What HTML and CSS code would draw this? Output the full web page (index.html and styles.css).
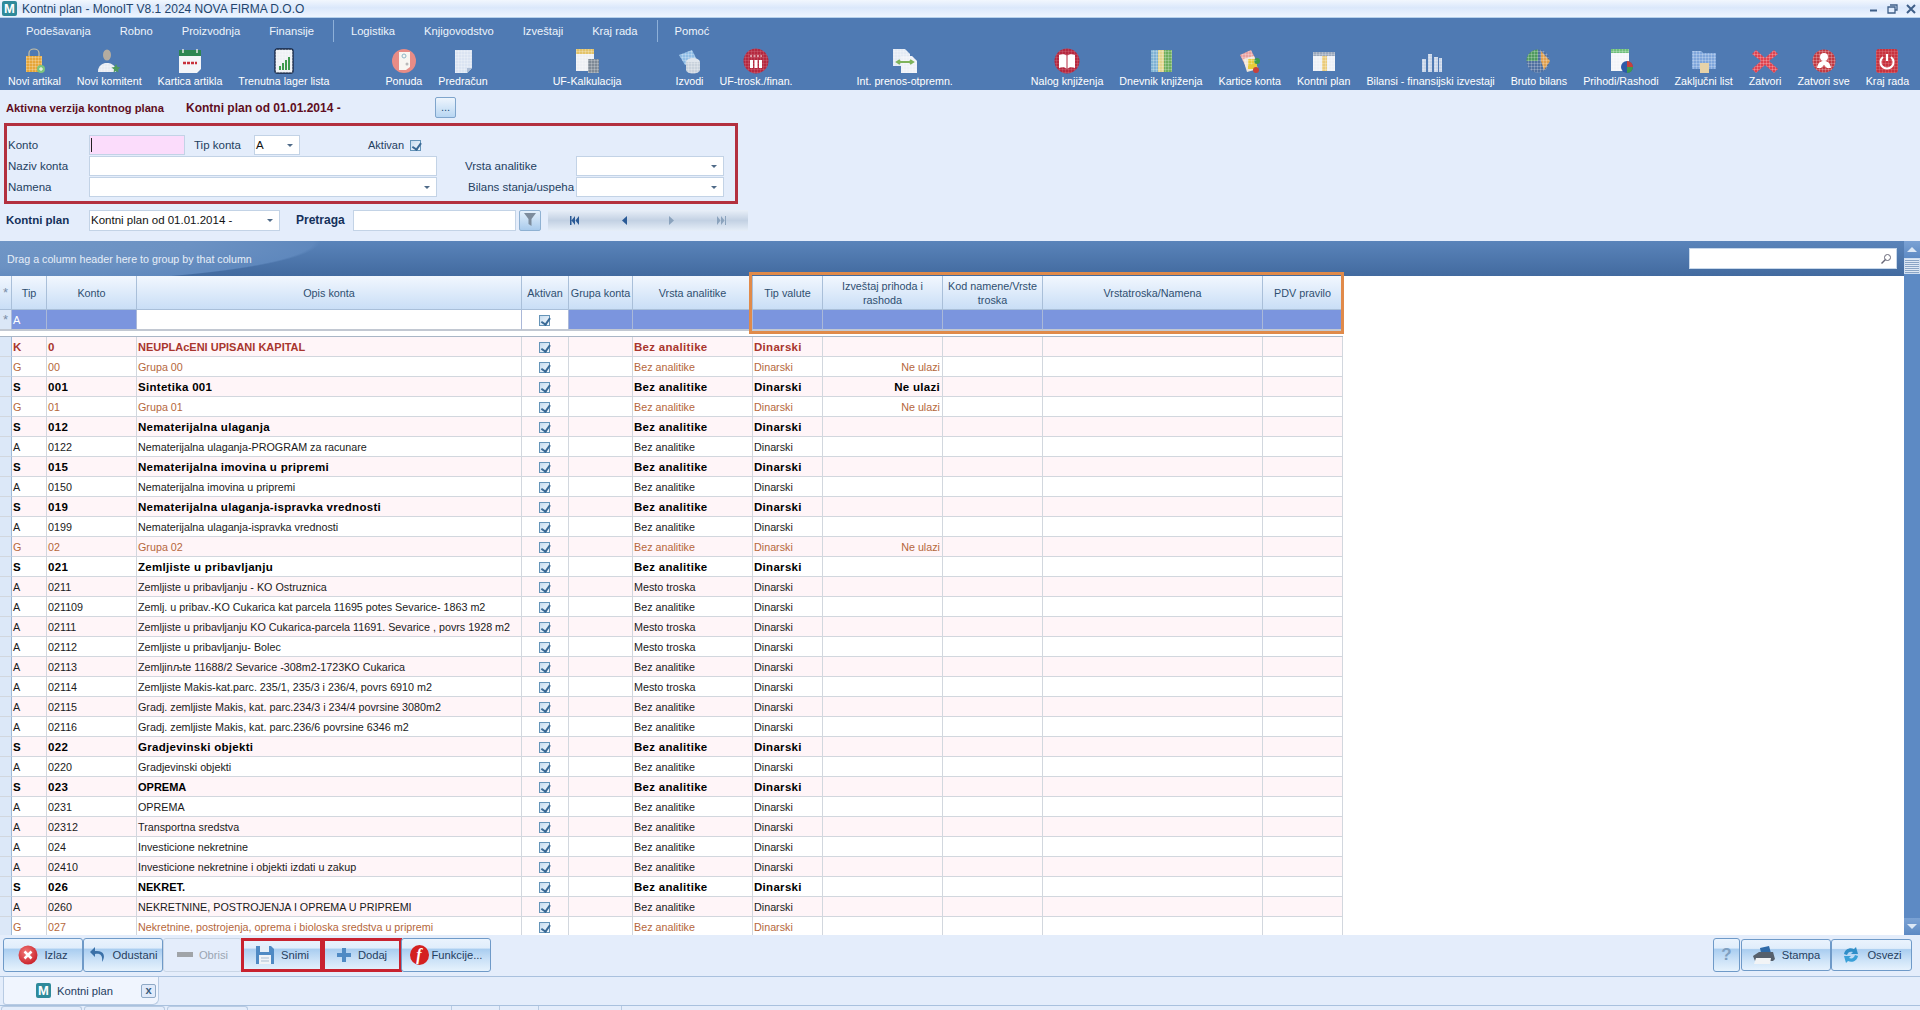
FILE: index.html
```html
<!doctype html>
<html lang="sr">
<head>
	<meta charset="UTF-8" />
	<title>Kontni plan - MonoIT V8.1 2024 NOVA FIRMA D.O.O</title>
	<link rel="stylesheet" href="styles.css">
</head>
<body>
<svg class="defs" width="0" height="0">
	<defs>
		<pattern id="gr" width="3" height="3" patternUnits="userSpaceOnUse">
			<path d="M0 0H3M0 0V3" stroke="#fff" stroke-opacity=".55" stroke-width=".8" fill="none"/>
		</pattern>
		<radialGradient id="redball" cx=".4" cy=".35" r=".7">
			<stop offset="0" stop-color="#f27a78"/><stop offset="1" stop-color="#c81e28"/>
		</radialGradient>
		<symbol id="i-bag" viewBox="0 0 28 26">
			<path d="M9 9V5a5 4 0 0 1 10 0v4" fill="none" stroke="#c9c1a6" stroke-width="1.2"/>
			<rect x="6" y="8" width="16" height="16" fill="#e6a63a"/><rect x="6" y="8" width="16" height="16" fill="url(#gr)"/>
			<circle cx="21" cy="21" r="4" fill="#7cc47e"/><path d="M19 21h4M21 19v4" stroke="#fff"/>
		</symbol>
		<symbol id="i-user" viewBox="0 0 28 26">
			<ellipse cx="12" cy="7" rx="4" ry="5.500" fill="#b4aca0"/>
			<path d="M3 24c0-7 5-9 9-9s9 2 9 9z" fill="#e8ecf2"/><path d="M3 24c0-7 5-9 9-9s9 2 9 9z" fill="url(#gr)"/>
			<path d="M21 16l1.500 3 3 .5-2.500 2 .5 3-2.500-1.500-2.500 1.500.5-3-2.500-2 3-.5z" fill="#4f9a5e"/>
		</symbol>
		<symbol id="i-cal" viewBox="0 0 28 26">
			<path d="M3 5h22v16l-4 4H3z" fill="#f3f5f8"/><rect x="3" y="2" width="22" height="6" fill="#2c8650"/>
			<path d="M7 1v4M21 1v4" stroke="#dfe8e0" stroke-width="1.500"/>
			<path d="M7 15h14" stroke="#c8313a" stroke-width="2.500" stroke-dasharray="3 1"/>
		</symbol>
		<symbol id="i-stock" viewBox="0 0 28 26">
			<rect x="5" y="1" width="18" height="24" rx="2" fill="#eef1f5" stroke="#14233f" stroke-width="1.300"/>
			<rect x="5" y="1" width="18" height="24" fill="url(#gr)"/>
			<path d="M9 22v-4h2v4zM12 22v-7h2v7zM15 22v-10h2v10zM18 22V9h2v13z" fill="#3f9a4e"/>
		</symbol>
		<symbol id="i-offer" viewBox="0 0 28 26">
			<circle cx="14" cy="13" r="12" fill="#e88c86"/>
			<path d="M9 4h11v15l-4 3H9z" fill="#f8f6f2"/><circle cx="14" cy="8" r="2" fill="none" stroke="#8fb6c8"/>
			<circle cx="17" cy="16" r="1.500" fill="#b9b9b9"/>
		</symbol>
		<symbol id="i-page" viewBox="0 0 28 26">
			<path d="M6 2h17v18l-5 5H6z" fill="#dbe4f2"/><path d="M6 2h17v18l-5 5H6z" fill="url(#gr)"/>
			<path d="M18 25v-5h5z" fill="#aebed6"/>
		</symbol>
		<symbol id="i-calc" viewBox="0 0 28 26">
			<rect x="3" y="1" width="18" height="22" fill="#eef0f4"/><rect x="3" y="1" width="18" height="5" fill="#e3c36a"/>
			<rect x="3" y="1" width="18" height="22" fill="url(#gr)"/>
			<rect x="15" y="11" width="11" height="14" fill="#7f8a96"/><rect x="15" y="11" width="11" height="14" fill="url(#gr)"/>
		</symbol>
		<symbol id="i-bank" viewBox="0 0 28 26">
			<path d="M3 7l13-5 5 10-12 5z" fill="#8fbde6"/><path d="M3 7l13-5 5 10-12 5z" fill="url(#gr)"/>
			<ellipse cx="17" cy="14" rx="7" ry="4" fill="#dfe5ec"/><path d="M10 14v8a7 3.500 0 0 0 14 0v-8z" fill="#c9d2dc"/>
			<path d="M10 14v8a7 3.500 0 0 0 14 0v-8z" fill="url(#gr)"/>
		</symbol>
		<symbol id="i-cost" viewBox="0 0 28 26">
			<circle cx="14" cy="13" r="12.500" fill="#b5283f"/><circle cx="14" cy="13" r="12.500" fill="url(#gr)" opacity=".5"/>
			<path d="M8 12h3v8H8zM12.500 12h3v8h-3zM17 12h3v8h-3z" fill="#fff"/><path d="M8 8h12" stroke="#fff" stroke-dasharray="2 1.500"/>
		</symbol>
		<symbol id="i-move" viewBox="0 0 28 26">
			<path d="M2 1h12l5 5v12H2z" fill="#e4eaf4"/><path d="M10 8h11l5 5v12H10z" fill="#eef1f7"/>
			<path d="M2 1h12l5 5v12H2zM10 8h11l5 5v12H10z" fill="url(#gr)"/>
			<path d="M7 14h14M9 12l-3 2 3 2M19 12l3 2-3 2" fill="none" stroke="#7fb35c" stroke-width="2"/>
		</symbol>
		<symbol id="i-book" viewBox="0 0 28 26">
			<circle cx="14" cy="13" r="12.500" fill="#b5283f"/><circle cx="14" cy="13" r="12.500" fill="url(#gr)" opacity=".5"/>
			<path d="M6 7c3-1 6-1 8 1 2-2 5-2 8-1v13c-3-1-6-1-8 1-2-2-5-2-8-1z" fill="#fff"/><path d="M14 8v13" stroke="#b5283f"/>
		</symbol>
		<symbol id="i-journal" viewBox="0 0 28 26">
			<rect x="4" y="2" width="7" height="22" fill="#7fb2d4"/><rect x="11" y="2" width="6" height="22" fill="#e2d48c"/>
			<rect x="17" y="2" width="8" height="22" fill="#6fae5e"/><rect x="4" y="2" width="21" height="22" fill="url(#gr)"/>
		</symbol>
		<symbol id="i-cards" viewBox="0 0 28 26">
			<path d="M4 7l11-5 6 12-11 5z" fill="#e8a0a0"/><path d="M7 11l11-3 4 13-11 3z" fill="#f0e6d8"/>
			<rect x="12" y="11" width="9" height="10" fill="#e8cc3a"/><circle cx="21" cy="13" r="3" fill="#3f9a4e"/>
			<circle cx="20" cy="22" r="3" fill="#c8403a"/><path d="M4 7l11-5 6 12-11 5z" fill="url(#gr)"/>
		</symbol>
		<symbol id="i-plan" viewBox="0 0 28 26">
			<rect x="3" y="4" width="22" height="19" fill="#eef1f6"/><rect x="3" y="4" width="22" height="4" fill="#9aa8bc"/>
			<rect x="12" y="8" width="5" height="15" fill="#eacb7a"/><rect x="3" y="4" width="22" height="19" fill="url(#gr)"/>
		</symbol>
		<symbol id="i-bars" viewBox="0 0 28 26">
			<path d="M5 11h4v13H5zM11 6h4v18h-4zM17 9h4v15h-4zM22 10h3v14h-3z" fill="#c6d4e8"/>
			<path d="M5 11h4v13H5zM11 6h4v18h-4zM17 9h4v15h-4zM22 10h3v14h-3z" fill="url(#gr)"/>
		</symbol>
		<symbol id="i-pie" viewBox="0 0 28 26">
			<circle cx="13" cy="13" r="11.500" fill="#5070a0"/>
			<path d="M13 13V1.500A11.500 11.500 0 0 0 1.500 13z" fill="#4f9a5e"/>
			<path d="M16 3l9 10-6 9-3-9z" fill="#e0a050"/><circle cx="13" cy="13" r="11.500" fill="url(#gr)"/>
		</symbol>
		<symbol id="i-inc" viewBox="0 0 28 26">
			<rect x="4" y="1" width="18" height="22" fill="#f3f5f8"/><rect x="4" y="1" width="18" height="4" fill="#6fbf7a"/>
			<rect x="4" y="1" width="18" height="22" fill="url(#gr)"/>
			<circle cx="20" cy="19" r="6" fill="#2d5aa8"/><path d="M20 19V13a6 6 0 0 1 6 6z" fill="#c8403a"/><path d="M20 19h6a6 6 0 0 1-6 6z" fill="#3f9a4e"/>
		</symbol>
		<symbol id="i-folder" viewBox="0 0 28 26">
			<path d="M2 3h9l2 2h13v16H2z" fill="#7fa6dc"/><path d="M2 3h9l2 2h13v16H2z" fill="url(#gr)"/>
			<rect x="10" y="15" width="9" height="10" fill="#e6d2a8"/>
		</symbol>
		<symbol id="i-x" viewBox="0 0 28 26">
			<path d="M5 2l9 8 9-8 4 4-9 7 9 8-4 4-9-8-9 8-4-4 9-8-9-7z" fill="#e0434f"/><path d="M5 2l9 8 9-8 4 4-9 7 9 8-4 4-9-8-9 8-4-4 9-8-9-7z" fill="url(#gr)"/>
		</symbol>
		<symbol id="i-xall" viewBox="0 0 28 26">
			<circle cx="14" cy="13" r="11.500" fill="#c23a42"/><circle cx="14" cy="13" r="11.500" fill="url(#gr)"/>
			<circle cx="14" cy="9" r="4" fill="#fff"/><path d="M7 20c1-6 4-7 7-7s6 1 7 7l-4 0-3-3-3 3z" fill="#fff"/>
		</symbol>
		<symbol id="i-off" viewBox="0 0 28 26">
			<rect x="3" y="1" width="22" height="24" rx="3" fill="#c8323e"/><rect x="3" y="1" width="22" height="24" rx="3" fill="url(#gr)" opacity=".6"/>
			<path d="M10 9a6.500 6.500 0 1 0 8 0" fill="none" stroke="#fff" stroke-width="2"/><path d="M14 6v7" stroke="#fff" stroke-width="2"/>
		</symbol>
	</defs>
</svg>

<div class="app">
	<header class="titlebar">
		<span class="appicon">M</span>
		<span class="title">Kontni plan - MonoIT V8.1 2024 NOVA FIRMA D.O.O</span>
		<span class="winbtns">
			<svg width="10" height="10"><path d="M1 6.500h7" stroke="#3f5f88" stroke-width="2"/></svg>
			<svg width="11" height="10"><path d="M3 1h7v5H8M1 3h7v6H1z" fill="none" stroke="#3f5f88" stroke-width="1.300"/></svg>
			<svg width="11" height="10"><path d="M1 1l8 8M9 1l-8 8" stroke="#3f5f88" stroke-width="2"/></svg>
		</span>
	</header>

	<nav class="menubar">
		<a>Podešavanja</a><a>Robno</a><a>Proizvodnja</a><a>Finansije</a>
		<i class="menusep"></i>
		<a>Logistika</a><a>Knjigovodstvo</a><a>Izveštaji</a><a>Kraj rada</a>
		<i class="menusep"></i>
		<a>Pomoć</a>
	</nav>

	<div class="toolbar">
		<a class="tool"><svg><use href="#i-bag"/></svg>Novi artikal</a>
		<a class="tool"><svg><use href="#i-user"/></svg>Novi komitent</a>
		<a class="tool"><svg><use href="#i-cal"/></svg>Kartica artikla</a>
		<a class="tool"><svg><use href="#i-stock"/></svg>Trenutna lager lista</a>
		<a class="tool gap-a"><svg><use href="#i-offer"/></svg>Ponuda</a>
		<a class="tool"><svg><use href="#i-page"/></svg>Predračun</a>
		<a class="tool gap-b"><svg><use href="#i-calc"/></svg>UF-Kalkulacija</a>
		<a class="tool gap-e"><svg><use href="#i-bank"/></svg>Izvodi</a>
		<a class="tool"><svg><use href="#i-cost"/></svg>UF-trosk./finan.</a>
		<a class="tool gap-c"><svg><use href="#i-move"/></svg>Int. prenos-otpremn.</a>
		<a class="tool gap-d"><svg><use href="#i-book"/></svg>Nalog knjiženja</a>
		<a class="tool"><svg><use href="#i-journal"/></svg>Dnevnik knjiženja</a>
		<a class="tool"><svg><use href="#i-cards"/></svg>Kartice konta</a>
		<a class="tool"><svg><use href="#i-plan"/></svg>Kontni plan</a>
		<a class="tool"><svg><use href="#i-bars"/></svg>Bilansi - finansijski izvestaji</a>
		<a class="tool"><svg><use href="#i-pie"/></svg>Bruto bilans</a>
		<a class="tool"><svg><use href="#i-inc"/></svg>Prihodi/Rashodi</a>
		<a class="tool"><svg><use href="#i-folder"/></svg>Zaključni list</a>
		<a class="tool"><svg><use href="#i-x"/></svg>Zatvori</a>
		<a class="tool"><svg><use href="#i-xall"/></svg>Zatvori sve</a>
		<a class="tool"><svg><use href="#i-off"/></svg>Kraj rada</a>
	</div>

	<section class="panel">
		<div class="verzija">
			<b class="v-label">Aktivna verzija kontnog plana</b>
			<b class="v-value">Kontni plan od 01.01.2014 -</b>
			<button class="dots">...</button>
		</div>

		<div class="form redbox">
			<label>Konto</label>
			<span class="input pink"><i class="caret"></i></span>
			<label class="tip">Tip konta</label>
			<span class="input combo">A</span>
			<span class="aktivan">Aktivan <i class="chk"></i></span>
			<span class="blank"></span>
			<span class="blank"></span>

			<label>Naziv konta</label>
			<span class="input wide"></span>
			<label class="ana">Vrsta analitike</label>
			<span class="input combo"></span>

			<label>Namena</label>
			<span class="input wide combo"></span>
			<label class="bil">Bilans stanja/uspeha</label>
			<span class="input combo"></span>
		</div>

		<div class="search">
			<b class="s-label">Kontni plan</b>
			<span class="input combo s-plan">Kontni plan od 01.01.2014 -</span>
			<b class="s-pre">Pretraga</b>
			<span class="input s-text"></span>
			<button class="filter"><svg width="14" height="16"><path d="M1 2h12L8.500 8v7l-3-2V8z" fill="#7d8c9c"/></svg></button>
			<div class="navi">
				<svg width="10" height="9"><path d="M1 0h1.500v9H1zM6 0v9L2.500 4.500zM10 0v9L6.500 4.500z" fill="#2a5a96"/></svg>
				<svg width="5" height="9"><path d="M5 0v9L0 4.500z" fill="#2a5a96"/></svg>
				<svg width="5" height="9"><path d="M0 0v9l5-4.500z" fill="#8ba3bd"/></svg>
				<svg width="10" height="9"><path d="M9 0h-1v9h1zM4 0v9l3.500-4.500zM0 0v9l3.500-4.500z" fill="#8ba3bd"/></svg>
			</div>
		</div>
	</section>

	<section class="gridarea">
		<div class="gridmain">
			<div class="groupbar">
				<span>Drag a column header here to group by that column</span>
				<span class="findbox"><svg width="12" height="12"><circle cx="7.500" cy="4.500" r="3" fill="none" stroke="#667"/><path d="M5.500 6.500L1.500 10.500" stroke="#667" stroke-width="1.500"/></svg></span>
			</div>
			<div class="gridscroll">
				<table class="grid">
					<colgroup>
						<col class="c-ind"><col class="c-tip"><col class="c-kon"><col class="c-opis"><col class="c-akt"><col class="c-gru">
						<col class="c-vrs"><col class="c-val"><col class="c-izv"><col class="c-kod"><col class="c-tro"><col class="c-pdv">
					</colgroup>
					<thead>
						<tr class="head"><th class="ind">*</th><th>Tip</th><th>Konto</th><th>Opis konta</th><th>Aktivan</th><th>Grupa konta</th><th>Vrsta analitike</th><th>Tip valute</th><th>Izveštaj prihoda i rashoda</th><th>Kod namene/Vrste troska</th><th>Vrstatroska/Namena</th><th>PDV pravilo</th></tr>
						<tr class="newrow"><td class="ind">*</td><td>A</td><td></td><td class="wh"></td><td class="wh c"><i class="chk"></i></td><td></td><td></td><td></td><td></td><td></td><td></td><td></td></tr>
						<tr class="spacer"><td colspan="12"></td></tr>
					</thead>
					<tbody>
						<tr class="rk"><td class="ind"></td><td>K</td><td>0</td><td class="up">NEUPLAcENI UPISANI KAPITAL</td><td class="c"><i class="chk"></i></td><td></td><td>Bez analitike</td><td>Dinarski</td><td class="r"></td><td></td><td></td><td></td></tr>
						<tr class="rg"><td class="ind"></td><td>G</td><td>00</td><td>Grupa 00</td><td class="c"><i class="chk"></i></td><td></td><td>Bez analitike</td><td>Dinarski</td><td class="r">Ne ulazi</td><td></td><td></td><td></td></tr>
						<tr class="rs"><td class="ind"></td><td>S</td><td>001</td><td>Sintetika 001</td><td class="c"><i class="chk"></i></td><td></td><td>Bez analitike</td><td>Dinarski</td><td class="r">Ne ulazi</td><td></td><td></td><td></td></tr>
						<tr class="rg"><td class="ind"></td><td>G</td><td>01</td><td>Grupa 01</td><td class="c"><i class="chk"></i></td><td></td><td>Bez analitike</td><td>Dinarski</td><td class="r">Ne ulazi</td><td></td><td></td><td></td></tr>
						<tr class="rs"><td class="ind"></td><td>S</td><td>012</td><td>Nematerijalna ulaganja</td><td class="c"><i class="chk"></i></td><td></td><td>Bez analitike</td><td>Dinarski</td><td class="r"></td><td></td><td></td><td></td></tr>
						<tr><td class="ind"></td><td>A</td><td>0122</td><td>Nematerijalna ulaganja-PROGRAM za racunare</td><td class="c"><i class="chk"></i></td><td></td><td>Bez analitike</td><td>Dinarski</td><td class="r"></td><td></td><td></td><td></td></tr>
						<tr class="rs"><td class="ind"></td><td>S</td><td>015</td><td>Nematerijalna imovina u pripremi</td><td class="c"><i class="chk"></i></td><td></td><td>Bez analitike</td><td>Dinarski</td><td class="r"></td><td></td><td></td><td></td></tr>
						<tr><td class="ind"></td><td>A</td><td>0150</td><td>Nematerijalna imovina u pripremi</td><td class="c"><i class="chk"></i></td><td></td><td>Bez analitike</td><td>Dinarski</td><td class="r"></td><td></td><td></td><td></td></tr>
						<tr class="rs"><td class="ind"></td><td>S</td><td>019</td><td>Nematerijalna ulaganja-ispravka vrednosti</td><td class="c"><i class="chk"></i></td><td></td><td>Bez analitike</td><td>Dinarski</td><td class="r"></td><td></td><td></td><td></td></tr>
						<tr><td class="ind"></td><td>A</td><td>0199</td><td>Nematerijalna ulaganja-ispravka vrednosti</td><td class="c"><i class="chk"></i></td><td></td><td>Bez analitike</td><td>Dinarski</td><td class="r"></td><td></td><td></td><td></td></tr>
						<tr class="rg"><td class="ind"></td><td>G</td><td>02</td><td>Grupa 02</td><td class="c"><i class="chk"></i></td><td></td><td>Bez analitike</td><td>Dinarski</td><td class="r">Ne ulazi</td><td></td><td></td><td></td></tr>
						<tr class="rs"><td class="ind"></td><td>S</td><td>021</td><td>Zemljiste u pribavljanju</td><td class="c"><i class="chk"></i></td><td></td><td>Bez analitike</td><td>Dinarski</td><td class="r"></td><td></td><td></td><td></td></tr>
						<tr><td class="ind"></td><td>A</td><td>0211</td><td>Zemljiste u pribavljanju - KO Ostruznica</td><td class="c"><i class="chk"></i></td><td></td><td>Mesto troska</td><td>Dinarski</td><td class="r"></td><td></td><td></td><td></td></tr>
						<tr><td class="ind"></td><td>A</td><td>021109</td><td>Zemlj. u pribav.-KO Cukarica kat parcela 11695 potes Sevarice- 1863 m2</td><td class="c"><i class="chk"></i></td><td></td><td>Bez analitike</td><td>Dinarski</td><td class="r"></td><td></td><td></td><td></td></tr>
						<tr><td class="ind"></td><td>A</td><td>02111</td><td>Zemljiste u pribavljanju KO Cukarica-parcela 11691. Sevarice , povrs 1928 m2</td><td class="c"><i class="chk"></i></td><td></td><td>Mesto troska</td><td>Dinarski</td><td class="r"></td><td></td><td></td><td></td></tr>
						<tr><td class="ind"></td><td>A</td><td>02112</td><td>Zemljiste u pribavljanju- Bolec</td><td class="c"><i class="chk"></i></td><td></td><td>Mesto troska</td><td>Dinarski</td><td class="r"></td><td></td><td></td><td></td></tr>
						<tr><td class="ind"></td><td>A</td><td>02113</td><td>Zemljinљte 11688/2 Sevarice -308m2-1723KO Cukarica</td><td class="c"><i class="chk"></i></td><td></td><td>Bez analitike</td><td>Dinarski</td><td class="r"></td><td></td><td></td><td></td></tr>
						<tr><td class="ind"></td><td>A</td><td>02114</td><td>Zemljiste Makis-kat.parc. 235/1, 235/3 i 236/4, povrs 6910 m2</td><td class="c"><i class="chk"></i></td><td></td><td>Mesto troska</td><td>Dinarski</td><td class="r"></td><td></td><td></td><td></td></tr>
						<tr><td class="ind"></td><td>A</td><td>02115</td><td>Gradj. zemljiste Makis, kat. parc.234/3 i 234/4 povrsine 3080m2</td><td class="c"><i class="chk"></i></td><td></td><td>Bez analitike</td><td>Dinarski</td><td class="r"></td><td></td><td></td><td></td></tr>
						<tr><td class="ind"></td><td>A</td><td>02116</td><td>Gradj. zemljiste Makis, kat. parc.236/6 povrsine 6346 m2</td><td class="c"><i class="chk"></i></td><td></td><td>Bez analitike</td><td>Dinarski</td><td class="r"></td><td></td><td></td><td></td></tr>
						<tr class="rs"><td class="ind"></td><td>S</td><td>022</td><td>Gradjevinski objekti</td><td class="c"><i class="chk"></i></td><td></td><td>Bez analitike</td><td>Dinarski</td><td class="r"></td><td></td><td></td><td></td></tr>
						<tr><td class="ind"></td><td>A</td><td>0220</td><td>Gradjevinski objekti</td><td class="c"><i class="chk"></i></td><td></td><td>Bez analitike</td><td>Dinarski</td><td class="r"></td><td></td><td></td><td></td></tr>
						<tr class="rs"><td class="ind"></td><td>S</td><td>023</td><td class="up">OPREMA</td><td class="c"><i class="chk"></i></td><td></td><td>Bez analitike</td><td>Dinarski</td><td class="r"></td><td></td><td></td><td></td></tr>
						<tr><td class="ind"></td><td>A</td><td>0231</td><td>OPREMA</td><td class="c"><i class="chk"></i></td><td></td><td>Bez analitike</td><td>Dinarski</td><td class="r"></td><td></td><td></td><td></td></tr>
						<tr><td class="ind"></td><td>A</td><td>02312</td><td>Transportna sredstva</td><td class="c"><i class="chk"></i></td><td></td><td>Bez analitike</td><td>Dinarski</td><td class="r"></td><td></td><td></td><td></td></tr>
						<tr><td class="ind"></td><td>A</td><td>024</td><td>Investicione nekretnine</td><td class="c"><i class="chk"></i></td><td></td><td>Bez analitike</td><td>Dinarski</td><td class="r"></td><td></td><td></td><td></td></tr>
						<tr><td class="ind"></td><td>A</td><td>02410</td><td>Investicione nekretnine i objekti izdati u zakup</td><td class="c"><i class="chk"></i></td><td></td><td>Bez analitike</td><td>Dinarski</td><td class="r"></td><td></td><td></td><td></td></tr>
						<tr class="rs"><td class="ind"></td><td>S</td><td>026</td><td class="up">NEKRET.</td><td class="c"><i class="chk"></i></td><td></td><td>Bez analitike</td><td>Dinarski</td><td class="r"></td><td></td><td></td><td></td></tr>
						<tr><td class="ind"></td><td>A</td><td>0260</td><td>NEKRETNINE, POSTROJENJA I OPREMA U PRIPREMI</td><td class="c"><i class="chk"></i></td><td></td><td>Bez analitike</td><td>Dinarski</td><td class="r"></td><td></td><td></td><td></td></tr>
						<tr class="rg"><td class="ind"></td><td>G</td><td>027</td><td>Nekretnine, postrojenja, oprema i bioloska sredstva u pripremi</td><td class="c"><i class="chk"></i></td><td></td><td>Bez analitike</td><td>Dinarski</td><td class="r"></td><td></td><td></td><td></td></tr>
					</tbody>
				</table>
				<div class="orangebox"></div>
			</div>
		</div>
		<div class="vscroll">
			<span class="sc-arrow"></span>
			<span class="sc-thumb"></span>
			<span class="sc-arrow down"></span>
		</div>
	</section>

	<div class="cmdbar">
		<button class="cmd w-izl">
			<svg width="20" height="20"><circle cx="10" cy="10" r="9.500" fill="url(#redball)"/><path d="M6.500 6.500l7 7M13.500 6.500l-7 7" stroke="#fff" stroke-width="2.500"/></svg>Izlaz</button>
		<button class="cmd w-odu">
			<svg width="18" height="20"><path d="M6 2L1 7l5 5V9c5-1 8 1 7 8 4-6 2-12-7-11z" fill="#3a70a8"/></svg>Odustani</button>
		<button class="cmd w-obr off">
			<svg width="16" height="8"><rect y="1" width="16" height="5" fill="#a0a4a8"/></svg>Obrisi</button>
		<button class="cmd w-sni marked">
			<svg width="20" height="20"><path d="M1 1h15l3 3v15H1z" fill="#4f8ac4"/><rect x="5" y="1" width="9" height="6" fill="#e4eef8"/><rect x="4" y="10" width="12" height="9" fill="#f0f4f8"/><path d="M6 13h8M6 16h8" stroke="#a9bdd2"/></svg>Snimi</button>
		<button class="cmd w-dod marked">
			<svg width="16" height="16"><path d="M6 1h4v5h5v4h-5v5H6v-5H1V6h5z" fill="#4f8ac4"/></svg>Dodaj</button>
		<button class="cmd w-fun">
			<span class="fn">f</span>Funkcije...</button>
		<span class="cmdfill"></span>
		<button class="cmd w-hlp"><span class="qm">?</span></button>
		<button class="cmd w-sta">
			<svg width="24" height="20"><path d="M8 3l9-2 2 7H9z" fill="#2f6aa8"/><path d="M1 11l6-4h14l2 7-2 2H3z" fill="#56606c"/><path d="M4 13l15 0-1 6H2z" fill="#f2f4f6"/></svg>Stampa</button>
		<button class="cmd w-osv">
			<svg width="20" height="20"><path d="M3 9c1-5 6-7 10-5l2-2 2 7-7 0 2-2c-3-1-5 0-6 3z" fill="#2f8ec8"/><path d="M17 11c-1 5-6 7-10 5l-2 2-2-7 7 0-2 2c3 1 5 0 6-3z" fill="#3aa0d8"/></svg>Osvezi</button>
	</div>

	<div class="tabbar">
		<div class="tab">
			<span class="appicon">M</span>
			<span>Kontni plan</span>
			<span class="tabx">x</span>
		</div>
	</div>
	<div class="statusbar">
		<i class="st-a"></i><i class="st-a"></i><i class="st-a"></i>
		<i class="st-b"></i><i class="st-c"></i><i class="st-d"></i><i class="st-e"></i>
	</div>
</div>
</body>
</html>
```

FILE: styles.css
```css
*{
	margin: 0;
	padding: 0;
	box-sizing: border-box;
}
html,body{
	height: 100%;
	overflow: hidden;
}
body{
	font-family: "Liberation Sans", Arial, sans-serif;
	font-size: 11px;
	color: #1b2b3d;
	background: #e4edfb;
}
.defs{
	display: block;
}
button{
	font: inherit;
	color: inherit;
}
.app{
	display: flex;
	flex-direction: column;
	width: 1920px;
	height: 1010px;
}

/* title */
.titlebar{
	display: flex;
	align-items: center;
	height: 18px;
	flex: none;
	background: linear-gradient(#f2f7fe,#dbe8fb 45%,#eef5ff);
	border-bottom: 1px solid #b5d0ec;
	padding-left: 2px;
}
.appicon{
	display: inline-block;
	width: 15px;
	height: 15px;
	line-height: 15px;
	text-align: center;
	font-weight: bold;
	font-size: 13px;
	color: #fff;
	background: #2f8a9a;
	border-radius: 2px;
}
.title{
	margin-left: 5px;
	font-size: 12px;
	color: #23456d;
}
.winbtns{
	margin-left: auto;
	display: flex;
	align-items: center;
	gap: 8px;
	padding-right: 3px;
}

/* menu + toolbar */
.menubar{
	display: flex;
	align-items: center;
	height: 26px;
	flex: none;
	background: #4f7ab3;
	padding-left: 26px;
	color: #eef4fb;
	font-size: 11.200px;
}
.menubar a{
	margin-right: 29px;
}
.menusep{
	width: 1px;
	height: 22px;
	background: #8eb0d8;
	margin: 0 17px 0 -10px;
}
.toolbar{
	display: flex;
	height: 46px;
	flex: none;
	background: #4f7ab3;
	padding: 4px 0 0 0;
	color: #fff;
	font-size: 10.700px;
}
.tool{
	display: flex;
	flex-direction: column;
	align-items: center;
	padding: 0 8px;
	white-space: nowrap;
}
.tool svg{
	width: 28px;
	height: 26px;
	margin-bottom: 1px;
}
.gap-a{ margin-left: 40px; }
.gap-b{ margin-left: 49px; }
.gap-c{ margin-left: 48px; }
.gap-d{ margin-left: 62px; }
.gap-e{ margin-left: 38px; }

/* top panel */
.panel{
	height: 151px;
	flex: none;
	background: #e4edfb;
	padding: 7px 0 0 4px;
}
.verzija{
	display: flex;
	align-items: center;
	height: 21px;
	color: #5f0d22;
	padding-left: 2px;
}
.v-label{
	width: 180px;
	font-size: 11.200px;
}
.v-value{
	width: 249px;
	font-size: 12px;
}
.dots{
	width: 21px;
	height: 21px;
	border: 1px solid #7fa5cc;
	border-radius: 2px;
	background: linear-gradient(#eef5fd,#b8d6f2);
	color: #24527e;
	line-height: 1;
}
.redbox{
	margin-top: 5px;
	width: 734px;
	height: 81px;
	border: 3px solid #b3303f;
}
.form{
	display: grid;
	grid-template-columns: 82px 96px 69px 46px 137px 139px 148px;
	grid-template-rows: 20px 20px 20px;
	row-gap: 1px;
	padding: 9px 0 0 0;
	align-items: center;
}
.form label{
	padding-left: 1px;
	font-size: 11.500px;
	color: #23405f;
	white-space: nowrap;
}
.form .tip{
	padding-left: 9px;
}
.form .ana{
	padding-left: 28px;
}
.form .bil{
	padding-left: 31px;
}
.input{
	display: block;
	position: relative;
	height: 20px;
	line-height: 18px;
	background: #fff;
	border: 1px solid #c3d3e6;
	padding-left: 1px;
	font-size: 11.500px;
	color: #111;
}
.input.pink{
	background: #fbdcfb;
}
.caret{
	display: block;
	width: 1px;
	height: 14px;
	margin-top: 2px;
	background: #222;
}
.input.wide{
	grid-column: 2 / 6;
}
.input.combo::after{
	content: "";
	position: absolute;
	right: 6px;
	top: 8px;
	border: 3px solid transparent;
	border-top: 3px solid #4f6a88;
	border-bottom: 0;
}
.aktivan{
	display: flex;
	align-items: center;
	gap: 6px;
	padding-left: 68px;
	font-size: 11px;
	color: #23405f;
}
.chk{
	display: inline-block;
	position: relative;
	width: 11px;
	height: 11px;
	background: linear-gradient(135deg,#c6dcef,#f4f9fe);
	border: 1px solid #6594b8;
	vertical-align: middle;
}
.chk::after{
	content: "";
	position: absolute;
	left: 3px;
	top: 0;
	width: 3.500px;
	height: 6.500px;
	border: solid #3a6a96;
	border-width: 0 2px 2px 0;
	transform: rotate(35deg);
}
.search{
	display: flex;
	align-items: center;
	height: 22px;
	margin-top: 5px;
	padding-left: 2px;
	color: #14305a;
}
.s-label{
	width: 83px;
	font-size: 11.500px;
}
.input.s-plan{
	width: 191px;
	height: 21px;
}
.s-pre{
	margin-left: 16px;
	width: 57px;
	font-size: 12px;
}
.input.s-text{
	width: 163px;
	height: 21px;
}
.filter{
	width: 22px;
	height: 21px;
	margin-left: 3px;
	border: 1px solid #8fb1d2;
	border-radius: 2px;
	background: linear-gradient(#e4f0fb,#a9cbec);
}
.navi{
	display: flex;
	align-items: center;
	justify-content: space-around;
	width: 200px;
	height: 21px;
	margin-left: 7px;
	background: linear-gradient(#e8eff8,#c3d1e3 50%,#e6eef8);
}

/* grid */
.gridarea{
	display: flex;
	height: 694px;
	flex: none;
	overflow: hidden;
}
.gridmain{
	flex: 1;
	display: flex;
	flex-direction: column;
	min-width: 0;
}
.groupbar{
	display: flex;
	align-items: center;
	justify-content: space-between;
	height: 35px;
	flex: none;
	padding: 0 7px;
	color: #e6eef8;
	font-size: 10.700px;
	background:
		radial-gradient(ellipse 320px 42px at 0 0,#7096c6 0,#6c92c3 60%,#5f88bd 98%,transparent 100%),
		linear-gradient(#5a84ba,#426a9f);
}
.findbox{
	display: flex;
	align-items: center;
	justify-content: flex-end;
	width: 208px;
	height: 21px;
	padding-right: 4px;
	background: #fff;
	border: 1px solid #c8d8ea;
}
.gridscroll{
	position: relative;
	flex: 1;
	background: #fff;
}
.grid{
	table-layout: fixed;
	width: 1343px;
	border-collapse: separate;
	border-spacing: 0;
	color: #1a1a1a;
}
.c-ind{ width: 12px; }
.c-tip{ width: 35px; }
.c-kon{ width: 90px; }
.c-opis{ width: 385px; }
.c-akt{ width: 47px; }
.c-gru{ width: 64px; }
.c-vrs{ width: 120px; }
.c-val{ width: 70px; }
.c-izv{ width: 120px; }
.c-kod{ width: 100px; }
.c-tro{ width: 220px; }
.c-pdv{ width: 80px; }

.grid th{
	height: 34px;
	padding-top: 2px;
	font-weight: normal;
	font-size: 10.800px;
	line-height: 13.500px;
	color: #2f4f70;
	background: linear-gradient(#f2f7fe,#c9def6);
	border-right: 1px solid #a9bfd9;
	border-bottom: 1px solid #a9bfd9;
}
.grid .head .ind,
.newrow .ind{
	padding: 0;
	font-size: 13px;
	color: #7a8ea8;
}
.newrow td{
	height: 20px;
	background: #7b95de;
	color: #fff;
	border-right: 1px solid #aab8d8;
	border-bottom: 1px solid #c2c8d2;
	padding-left: 1px;
}
.newrow .ind{
	background: #dbe7f7;
	text-align: center;
}
.newrow .wh{
	background: #fff;
}
.spacer td{
	height: 7px;
	background: #fff;
	border-top: 1px solid #c2c8d2;
	border-bottom: 1px solid #a9b6c6;
}
tbody td{
	height: 20px;
	padding: 0 2px 0 1px;
	white-space: nowrap;
	overflow: hidden;
	border-right: 1px solid #d2d7de;
	border-bottom: 1px solid #d2d7de;
	font-size: 10.750px;
}
tbody tr:nth-child(odd){
	background: #fff5f8;
}
tbody .ind{
	background: #dce8f8;
	border-right: 1px solid #9fbad9;
}
td.c{
	text-align: center;
	padding: 0 2px 0 0;
}
.r{
	text-align: right;
}
.rk td,
.rs td{
	font-weight: bold;
	font-size: 11.500px;
	letter-spacing: .3px;
}
.rk{
	color: #a8352e;
}
.rg{
	color: #b5673c;
}
.rs{
	color: #000;
}
.rk .up,
.rs .up{
	font-size: 11px;
	letter-spacing: 0;
}
.orangebox{
	position: absolute;
	left: 749px;
	top: -4px;
	width: 595px;
	height: 62px;
	border: 3px solid #e08a4a;
}
.vscroll{
	display: flex;
	flex-direction: column;
	width: 16px;
	flex: none;
	background: #5d8ac4;
}
.sc-arrow{
	height: 17px;
	flex: none;
	background: linear-gradient(#7ba2d4,#5d8ac4);
	position: relative;
}
.sc-arrow::after{
	content: "";
	position: absolute;
	left: 3px;
	top: 6px;
	border: 5px solid transparent;
	border-bottom: 5px solid #dce8f6;
	border-top: 0;
}
.sc-arrow.down{
	margin-top: auto;
}
.sc-arrow.down::after{
	border-top: 5px solid #dce8f6;
	border-bottom: 0;
}
.sc-thumb{
	height: 16px;
	flex: none;
	background: repeating-linear-gradient(#dfe9f5 0 1px,#8aa5c6 1px 2px);
	border: 1px solid #cfdef0;
}

/* bottom */
.cmdbar{
	position: relative;
	display: flex;
	align-items: center;
	height: 42px;
	flex: none;
	padding: 0 0 1px 3px;
	background: #e4edfb;
	border-bottom: 1px solid #a9c1de;
}
.cmd{
	display: flex;
	align-items: center;
	justify-content: center;
	gap: 6px;
	position: relative;
	height: 34px;
	border: 1px solid #6f9ac8;
	border-radius: 3px;
	color: #24405f;
	font-size: 11.200px;
	background: linear-gradient(#eaf3fd,#e0edfb 28%,#a9cdf0 32%,#cfe4f8 70%,#e6f2fd);
}
.w-izl{ width: 80px; }
.w-odu{ width: 80px; }
.w-obr{ width: 79px; }
.w-sni{ width: 80px; }
.w-dod{ width: 79px; }
.w-fun{ width: 90px; gap: 3px; }
.w-hlp{ width: 27px; margin-right: 1px; }
.w-sta{ width: 90px; height: 32px; }
.w-osv{ width: 81px; height: 32px; margin-right: 8px; }
.cmd.off{
	color: #9aa5b2;
	background: #e4edfb;
	border-color: #c9d6e6;
}
.marked::after{
	content: "";
	position: absolute;
	left: -2px;
	right: -2px;
	top: -1px;
	bottom: -1px;
	border: 3px solid #c8222f;
}
.w-dod.marked::after{
	left: -1px;
}
.cmdfill{
	flex: 1;
}
.fn{
	display: inline-block;
	width: 19px;
	height: 20px;
	line-height: 20px;
	border-radius: 50%;
	background: #d42020;
	color: #fff;
	font: italic bold 16px/20px "Liberation Serif", serif;
	text-align: center;
}
.qm{
	font-size: 17px;
	color: #7f9fc0;
	font-weight: bold;
}
.tabbar{
	height: 28px;
	flex: none;
	padding-left: 3px;
	background: #e4edfb;
}
.tab{
	display: flex;
	align-items: center;
	width: 156px;
	height: 28px;
	padding-left: 32px;
	gap: 6px;
	font-size: 11.200px;
	color: #24405f;
	background: #f0f5fe;
	border: 1px solid #b8cbe3;
	border-top: 0;
	border-radius: 0 0 6px 3px;
}
.tabx{
	margin-left: auto;
	margin-right: 2px;
	width: 15px;
	height: 14px;
	line-height: 11px;
	text-align: center;
	font-weight: bold;
	color: #3a5a7c;
	border: 1px solid #8fa9c6;
	border-radius: 2px;
	background: #e0eafa;
}
.statusbar{
	display: flex;
	height: 5px;
	flex: none;
	padding-left: 1px;
	gap: 2px;
	background: #e4edfb;
	border-top: 1px solid #a9c1de;
}
.statusbar i{
	display: block;
	border-right: 1px solid #b8cbe3;
}
.st-a{ width: 81px; border: 1px solid #b8cbe3; border-bottom: 0; border-radius: 3px 3px 0 0; }
.st-b{ width: 202px; }
.st-c{ width: 46px; }
.st-d{ width: 37px; }
.st-e{ width: 81px; }
```
